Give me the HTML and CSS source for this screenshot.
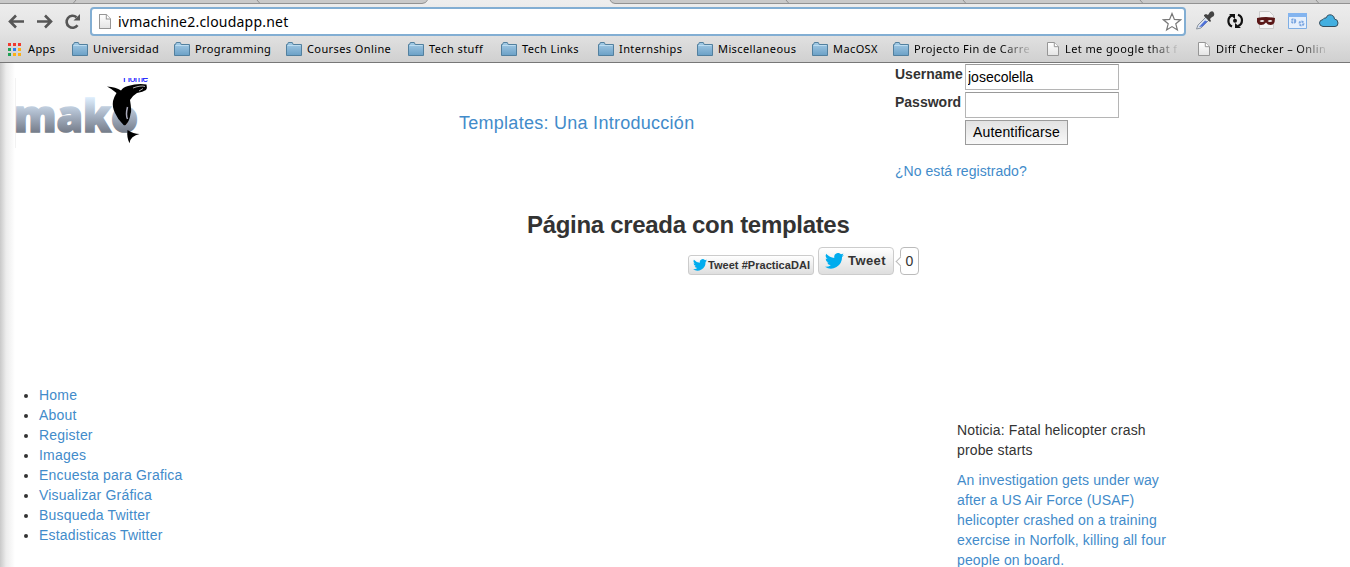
FILE: index.html
```html
<!DOCTYPE html>
<html lang="es">
<head>
<meta charset="utf-8">
<title>Página creada con templates</title>
<link rel="stylesheet" href="styles.css">
</head>
<body>
<svg class="defs" width="0" height="0" aria-hidden="true">
  <defs>
    <linearGradient id="folderFill" x1="0" y1="0" x2="0" y2="1"><stop offset="0" stop-color="#a5cce6"/><stop offset="1" stop-color="#6ba0c6"/></linearGradient>
    <linearGradient id="makoFill" gradientUnits="userSpaceOnUse" x1="0" y1="20" x2="0" y2="55"><stop offset="0" stop-color="#dcecfb"/><stop offset="0.5" stop-color="#a6b2c3"/><stop offset="1" stop-color="#747b88"/></linearGradient>
    <linearGradient id="pageFill" x1="0" y1="0" x2="0" y2="1"><stop offset="0" stop-color="#fff"/><stop offset="1" stop-color="#e4e4e4"/></linearGradient>
  </defs>
  <symbol id="folder" viewBox="0 0 16 14"><path d="M.5 13.500V2.500h1L2.300.5h4l.9 2h8.300v11z" fill="url(#folderFill)" stroke="#52809f"/><path d="M1.500 3.500h13" stroke="#bcdcf0"/></symbol>
  <symbol id="page" viewBox="0 0 12 14"><path d="M.5.5h6.800L11.500 4.700v8.800H.5z" fill="url(#pageFill)" stroke="#969696"/><path d="M7.300.5v4.200h4.200" fill="#fff" stroke="#969696"/></symbol>
  <symbol id="bird" viewBox="0 0 24 20"><path fill="#00acee" d="M24 2.400a10 10 0 0 1-2.800.8A5 5 0 0 0 23.300.4a10 10 0 0 1-3.100 1.200 4.900 4.900 0 0 0-8.400 4.500A14 14 0 0 1 1.700.9a4.900 4.900 0 0 0 1.500 6.600A5 5 0 0 1 1 6.900a4.900 4.900 0 0 0 3.900 4.900 5 5 0 0 1-2.200.1 4.900 4.900 0 0 0 4.600 3.400A10 10 0 0 1 0 17.300 14 14 0 0 0 21.500 4.900 10 10 0 0 0 24 2.400z"/></symbol>
</svg>

<header class="browser">
  <svg class="tabs" width="1350" height="5" viewBox="0 0 1350 5">
    <path d="M0 0H427Q425.500 3.500 422 3.500H0z" fill="#c9c9c9"/>
    <path d="M610 0H1350V3.500H615Q611.500 3.500 610 0z" fill="#c9c9c9"/>
    <path d="M0 3.500H422Q426 3.500 427.500 0M610 0Q611.500 3.500 615 3.500H1350" fill="none" stroke="#929292"/>
    <path d="M73 3.500l3-3.500M257 0l3 3.500M786 0l3 3.500M963 0l3 3.500M1140 0l3 3.500M1316 0l3 3.500" stroke="#929292"/>
  </svg>
  <div class="toolbar">
    <svg class="nav" width="82" height="26" viewBox="0 0 82 26" fill="none" stroke="#565656" stroke-width="2.600">
      <path d="M24 13.500H11M16 7.500l-6 6 6 6M37 13.500H50M45 7.500l6 6-6 6"/>
      <path d="M77.500 17.300A6 6 0 1 1 76.500 9.200"/><path d="M80 6v6.500h-6.500z" fill="#565656" stroke="none"/>
    </svg>
    <div class="omnibox">
      <svg class="site" width="12" height="15" viewBox="0 0 12 14" preserveAspectRatio="none"><use href="#page" width="12" height="14"/></svg>
      <span class="url">ivmachine2.cloudapp.net</span>
      <svg class="star" width="20" height="20" viewBox="0 0 20 20"><path d="M10 1.500l2.400 5.900 6.200.4-4.800 4 1.600 6.200-5.400-3.400L4.600 18l1.600-6.200-4.800-4 6.200-.4z" fill="#fff" stroke="#777" stroke-width="1.200"/></svg>
    </div>
    <svg class="extensions" width="150" height="24" viewBox="0 0 150 24">
      <path d="M1.500 20L3 16 11 8l3 3-8 8z" fill="#dce4ee" stroke="#8b939e"/><path d="M4 18l3.500-.5 5-5-2.500-1z" fill="#4d70d8"/><path d="M9 6l2-1 2 1 2-3q3-2 4 1t-2 4l-2 2 1 2-1 1-6-6z" fill="#444"/>
      <g fill="none" stroke="#111" stroke-width="2.200"><path d="M37 17.500A6 6 0 0 1 37 6.500M43 5.700A6 6 0 0 1 43 17"/></g><path d="M34 5h6v5zM46 19h-6v-5z" fill="#111"/><circle cx="40" cy="11.800" r="2" fill="#111"/>
      <path d="M64.500 2.500h10l4 4v13h-14z" fill="#f4f4f4" stroke="#ccc"/><path d="M62 9q9-2 18 0l-.4 4q-1 3-4 3t-4.600-2.500q-2 2.500-5 2.500t-4-3z" fill="#5a1717"/><path d="M64.500 12q3-2 5 0-2.500 2-5 0M72.500 12q3-2 5 0-2.500 2-5 0" fill="#eee"/>
      <path d="M93.500 4.500h18v15h-18z" fill="#e5effc" stroke="#7eaee4"/><path d="M93 4h19v4H93z" fill="#83b4ef"/><g fill="none" stroke="#79a5e0" stroke-width="2"><circle cx="98.500" cy="12" r="1.800" stroke-dasharray="2 .8"/><circle cx="106.500" cy="14.500" r="2" stroke-dasharray="2 .8"/></g>
      <path d="M128 17.500q-3.500-.5-3.500-3.500t3.500-3.500q1-2 3-1.500 1.500-4 5.500-3 3 1 3 4 3.500.5 3.500 4t-3 3.500z" fill="#43afe0" stroke="#354e5e"/>
    </svg>
  </div>
  <nav class="bookmarks">
    <a class="bm apps"><svg width="13" height="13" viewBox="0 0 13 13"><path d="M0 0h3v3H0zM5 0h3v3H5zM10 0h3v3h-3z" fill="#f03a2e"/><path d="M0 5h3v3H0zM0 10h3v3H0z" fill="#1fa055"/><path d="M5 5h3v3H5z" fill="#2c7df0"/><path d="M10 5h3v3h-3zM5 10h3v3H5zM10 10h3v3h-3z" fill="#fbb017"/></svg><span>Apps</span></a>
    <a class="bm w102"><svg width="16" height="14"><use href="#folder"/></svg><span>Universidad</span></a>
    <a class="bm w112"><svg width="16" height="14"><use href="#folder"/></svg><span>Programming</span></a>
    <a class="bm w122"><svg width="16" height="14"><use href="#folder"/></svg><span>Courses Online</span></a>
    <a class="bm w93"><svg width="16" height="14"><use href="#folder"/></svg><span>Tech stuff</span></a>
    <a class="bm w97"><svg width="16" height="14"><use href="#folder"/></svg><span>Tech Links</span></a>
    <a class="bm w99"><svg width="16" height="14"><use href="#folder"/></svg><span>Internships</span></a>
    <a class="bm w115"><svg width="16" height="14"><use href="#folder"/></svg><span>Miscellaneous</span></a>
    <a class="bm w81"><svg width="16" height="14"><use href="#folder"/></svg><span>MacOSX</span></a>
    <a class="bm w154"><svg width="16" height="14"><use href="#folder"/></svg><span class="fade">Projecto Fin de Carre</span></a>
    <a class="bm doc w151"><svg width="12" height="14"><use href="#page"/></svg><span class="fade">Let me google that f</span></a>
    <a class="bm doc w151"><svg width="12" height="14"><use href="#page"/></svg><span class="fade">Diff Checker – Onlin</span></a>
  </nav>
</header>

<main class="site-page">
  <section class="top">
    <svg class="logo" width="140" height="72" viewBox="0 0 140 72">
      <path d="M.5 0v70" stroke="#f2f2f2"/>
      <text class="home-alt" x="108" y="3.500" textLength="25">Home</text>
      <text class="wordmark" x="-1" y="53.500" textLength="124" lengthAdjust="spacingAndGlyphs">mako</text>
      <path d="M92 8.500Q101 9 106 12.500 108 9 113 8q10-3 18.500-1.500Q132.500 10 131 12q-3 2-9 3-5 3-7 7 2 12 .5 14-1 7-4 10-1 2-3 1-6-6-8.500-12-3-6-2-12 1-4 3.500-8Q97 11 92 8.500z"/>
      <path d="M118 10q8-3 12-1.500M124 13l4-2.500" stroke="#ddd" stroke-width=".8" fill="none"/><path d="M112.500 29q-2 8 0 12" stroke="#aab" stroke-width="1.500" fill="none"/>
      <path d="M112.500 52q6 4 12 4-4 1-7 3.300-3 2.700-3 6-3-6-2-13.300z"/>
    </svg>
    <a class="heading-link">Templates: Una Introducción</a>
    <form class="login">
      <label for="user">Username</label><input id="user" type="text" value="josecolella">
      <label for="pass">Password</label><input id="pass" type="password">
      <button type="button">Autentificarse</button>
      <a class="register">¿No está registrado?</a>
    </form>
  </section>
  <h3>Página creada con templates</h3>
  <div class="tweets">
    <a class="tweet small"><svg width="14" height="12"><use href="#bird"/></svg><span>Tweet #PracticaDAI</span></a>
    <a class="tweet large"><svg width="19" height="16"><use href="#bird"/></svg><span>Tweet</span></a>
    <span class="count">0</span>
  </div>
  <section class="lower">
    <ul>
      <li><a>Home</a></li><li><a>About</a></li><li><a>Register</a></li><li><a>Images</a></li>
      <li><a>Encuesta para Grafica</a></li><li><a>Visualizar Gráfica</a></li><li><a>Busqueda Twitter</a></li><li><a>Estadisticas Twitter</a></li>
    </ul>
    <article class="news">
      <p>Noticia: Fatal helicopter crash<br>probe starts</p>
      <p><a>An investigation gets under way<br>after a US Air Force (USAF)<br>helicopter crashed on a training<br>exercise in Norfolk, killing all four<br>people on board.</a></p>
    </article>
  </section>
</main>
</body>
</html>
```
FILE: styles.css
```css
* { box-sizing: border-box; }
html, body { height: 567px; overflow: hidden; }
body { margin: 0; background: #fff; color: #333; font: 14px/20px "Liberation Sans", Arial, sans-serif; }
svg { display: block; flex: none; }
.defs { position: absolute; }
a { color: #428bca; text-decoration: none; }

.browser { height: 63px; background: linear-gradient(#eeeeee, #e4e4e4 30px, #d0d0d0); border-bottom: 1px solid #777; color: #000; }
.tabs { height: 5px; }
.toolbar { display: flex; height: 32px; }
.nav { margin: 3px 8px 0 0; }
.omnibox { display: flex; align-items: center; width: 1096px; height: 29px; margin-top: 2px; padding: 0 2px 0 7px; background: #fff; border: 2px solid #82aed3; border-radius: 4px; }
.site { margin-right: 7px; }
.url { flex: 1; font: 14px/20px "Noto Sans", sans-serif; letter-spacing: 0.22px; }
.extensions { margin: 4px 0 0 9px; }

.bookmarks { display: flex; height: 24px; padding-left: 8px; }
.bm { display: flex; align-items: center; gap: 5px; flex: none; color: #000; font: 11px/16px "Noto Sans", sans-serif; letter-spacing: 0.4px; white-space: nowrap; }
.apps { width: 64px; gap: 7px; }
.doc { gap: 6px; }
.w81 { width: 81px; }
.w93 { width: 93px; }
.w97 { width: 97px; }
.w99 { width: 99px; }
.w102 { width: 102px; }
.w112 { width: 112px; }
.w115 { width: 115px; }
.w122 { width: 122px; }
.w151 { width: 151px; }
.w154 { width: 154px; }
.fade { -webkit-mask-image: linear-gradient(90deg, #000 75%, rgba(0, 0, 0, 0.1)); mask-image: linear-gradient(90deg, #000 75%, rgba(0, 0, 0, 0.1)); }

.site-page { height: 504px; background: linear-gradient(90deg, #c9c9c9, #ececec 6px, #fff 15px); }
.top { display: flex; height: 146px; }
.logo { margin: 15px 0 0 15px; overflow: hidden; }
.home-alt { font: 10px "Liberation Sans", sans-serif; fill: #00f; }
.wordmark { font: 800 45px "Open Sans", sans-serif; fill: url(#makoFill); stroke: url(#makoFill); stroke-width: 1.6px; }
.heading-link { width: 436px; margin: 50px 0 0 304px; font-size: 18px; letter-spacing: 0.27px; }
.login { display: grid; grid-template-columns: 68px 154px; grid-template-rows: 26px 26px 25px 20px; gap: 2px; padding-top: 1px; height: 120px; }
.login label { font-weight: bold; }
.login input { width: 154px; height: 26px; padding: 1px 2px; border: 1px solid #b5b5b5; border-top-color: #999; border-radius: 0; color: #000; font: 14px "Liberation Sans", sans-serif; }
.login button { grid-column: 2; width: 103px; height: 25px; padding: 0 0 2px; border: 1px solid #9b9b9b; border-radius: 0; background: linear-gradient(#e2e2e2, #f8f8f8); color: #000; font: 14px "Liberation Sans", sans-serif; letter-spacing: 0.15px; }
.register { grid-column: 1 / 3; margin-top: 14px; letter-spacing: 0.05px; }

h3 { width: 322px; margin: 3px 0 0 527px; font-size: 24px; line-height: 26px; font-weight: bold; white-space: nowrap; letter-spacing: -0.31px; }
.tweets { display: flex; align-items: flex-end; height: 28px; margin: 9px 0 0 688px; }
.tweet { display: flex; align-items: center; border: 1px solid #ccc; border-radius: 3px; background: linear-gradient(#fff, #dedede); color: #333; font-weight: bold; white-space: nowrap; }
.small { width: 126px; height: 20px; padding-left: 4px; gap: 1px; font-size: 11px; margin-right: 4px; letter-spacing: 0.04px; }
.large { width: 76px; height: 28px; padding-left: 6px; gap: 4px; font-size: 13px; border-radius: 4px; letter-spacing: 0.4px; }
.count { position: relative; width: 19px; height: 28px; margin-left: 6px; border: 1px solid #bbb; border-radius: 4px; background: #fff; text-align: center; line-height: 26px; }
.count::before { content: ""; position: absolute; left: -4px; top: 10px; width: 6px; height: 6px; background: #fff; border: solid #bbb; border-width: 0 0 1px 1px; transform: rotate(45deg); }

.lower { display: flex; padding-top: 110px; }
ul { width: 957px; margin: 0; padding-left: 39px; letter-spacing: 0.2px; }
.news { padding-top: 35px; letter-spacing: 0.14px; }
.news p { margin: 0 0 10px; white-space: nowrap; }
```
